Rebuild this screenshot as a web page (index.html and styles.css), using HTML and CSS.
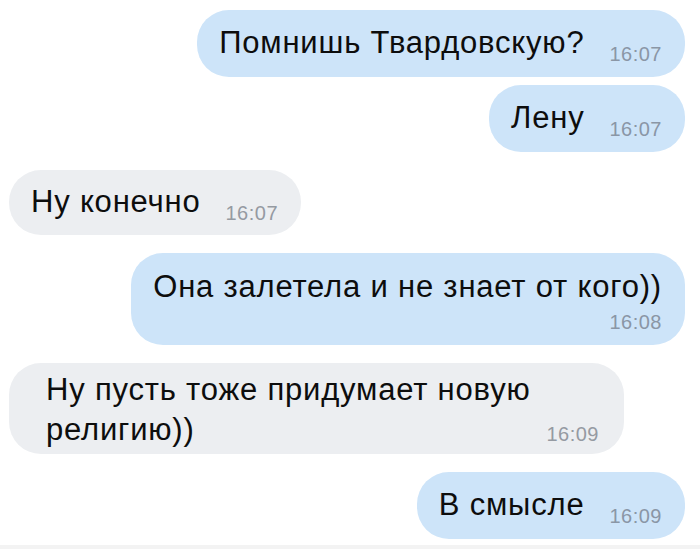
FILE: index.html
```html
<!DOCTYPE html>
<html lang="ru">
<head>
  <meta charset="UTF-8" />
  <meta name="viewport" content="width=device-width, initial-scale=1.0" />
  <title>Чат</title>
  <link rel="stylesheet" href="styles.css">
</head>
<body>

<main class="chat">
  <div class="msg out">
    <span class="text">Помнишь Твардовскую?</span><span class="time">16:07</span>
  </div>
  <div class="msg out same">
    <span class="text">Лену</span><span class="time">16:07</span>
  </div>
  <div class="msg in">
    <span class="text">Ну конечно</span><span class="time">16:07</span>
  </div>
  <div class="msg out tall">
    <div class="text">Она залетела и не знает от кого))</div>
    <div class="time block">16:08</div>
  </div>
  <div class="msg in wide">
    <span class="text">Ну пусть тоже придумает новую религию))</span><span class="time float">16:09</span>
  </div>
  <div class="msg out">
    <span class="text">В смысле</span><span class="time">16:09</span>
  </div>
</main>

<div class="bottom-line"></div>

</body>
</html>
```

FILE: styles.css
```css
body {
  margin: 0;
  background: #fff;
  color: #0d0d0d;
  font-family: "Liberation Sans", Arial, sans-serif;
  height: 549px;
  overflow: hidden;
  position: relative;
}
.chat {
  display: flex;
  flex-direction: column;
  padding: 10px 15px 0 9px;
}
.msg {
  font-size: 31px;
  letter-spacing: 0.8px;
  line-height: 40px;
  padding: 13px 23px 13px 22px;
  border-radius: 32px;
  margin-top: 18px;
  white-space: nowrap;
}
.msg:first-child {
  margin-top: 0;
}
.msg.same {
  margin-top: 8px;
}
.msg.out {
  align-self: flex-end;
  background: #cde4f9;
}
.msg.in {
  align-self: flex-start;
  background: #eceef1;
}
.msg.in:nth-child(3) {
  padding-top: 12px;
  padding-bottom: 12px;
}
.time {
  font-size: 20px;
  letter-spacing: 0.5px;
  line-height: 1;
  color: #8a96a6;
  margin-left: 25px;
  vertical-align: -8px;
}
.msg.in .time {
  color: #959aa2;
}

/* two-line bubbles */
.msg.tall {
  padding: 14px 23px 8px 22px;
}
.time.block {
  display: block;
  text-align: right;
  line-height: 30px;
  vertical-align: baseline;
}
.msg.wide {
  width: 553px;
  white-space: normal;
  padding: 7px 25px 4px 37px;
}
.time.float {
  float: right;
  line-height: 20px;
  margin-top: 14px;
  vertical-align: baseline;
}
.bottom-line {
  position: absolute;
  left: 0;
  right: 0;
  bottom: 0;
  height: 4px;
  background: #f3f3f3;
}
```
